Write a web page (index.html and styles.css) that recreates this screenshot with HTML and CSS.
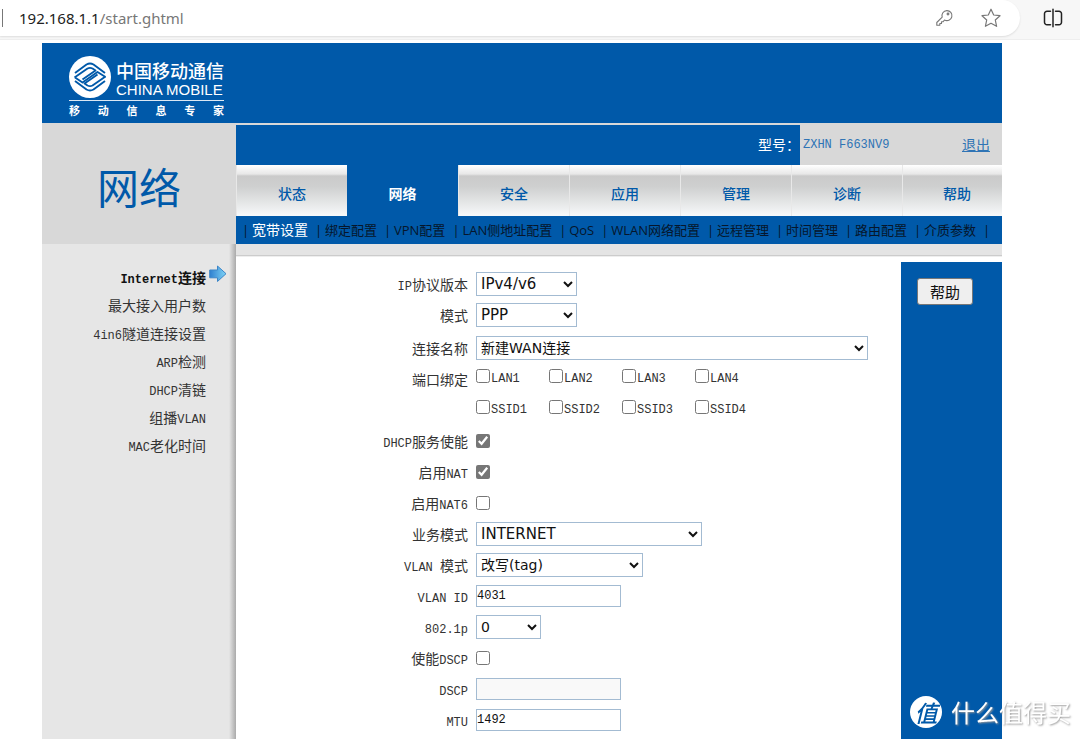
FILE: index.html
```html
<!DOCTYPE html>
<html lang="zh-CN">
<head>
<meta charset="utf-8">
<title>ZXHN F663NV9</title>
<link rel="stylesheet" href="styles.css">
</head>
<body>
<div class="browser-bar">
  <div class="address">
    <span class="divider"></span>
    <p class="url"><b>192.168.1.1</b>/start.ghtml</p>
    <button class="icon-button" aria-label="密码"><svg width="18" height="18" viewBox="0 0 18 18" fill="none" stroke="#777" stroke-width="1.1" stroke-linejoin="round"><path d="M7.2 8.2 1.8 13.500V16.200H4.800V14.500H6.500V12.800H8L9.500 11A5 5 0 1 0 7.200 8.200Z"/><circle cx="13" cy="5" r="0.900"/></svg></button>
    <button class="icon-button star" aria-label="收藏"><svg width="20" height="20" viewBox="0 0 20 20" fill="none" stroke="#777" stroke-width="1.200" stroke-linejoin="round"><path d="M10 1.200 12.700 7 19 7.700 14.300 12 15.600 18.300 10 15.300 4.400 18.300 5.700 12 1 7.700 7.300 7Z"/></svg></button>
  </div>
  <button class="icon-button split" aria-label="分屏"><svg width="20" height="20" viewBox="0 0 20 20" fill="none" stroke="#222" stroke-width="1.500" stroke-linecap="round"><path d="M10 1.200V18.800M7.500 3.200H4A2.500 2.500 0 0 0 1.500 5.700V14.300A2.500 2.500 0 0 0 4 16.800H7.500M12.500 3.200H16A2.500 2.500 0 0 1 18.500 5.700V14.300A2.500 2.500 0 0 1 16 16.800H12.500"/></svg></button>
</div>

<div class="page">
  <header class="banner">
    <div class="logo">
      <div class="logo-top">
        <svg width="42" height="42" viewBox="0 0 42 42"><circle cx="21" cy="21" r="21" fill="#fff"/><g fill="none" stroke="#0059a9" stroke-width="1.900" stroke-linejoin="round"><path d="M6 17 17.500 8.500Q21 6.500 24.500 8.500L36 17"/><path d="M5.500 21.500 18.500 12.500Q21 11.200 23.500 12.500L26.500 14.500 13.500 23.500"/><path d="M36.500 20.500 23.500 29.500Q21 30.800 18.500 29.500L15.500 27.500 28.500 18.500"/><path d="M6 21.500 13.500 26.500 28.500 16 36.500 21"/><path d="M6 25 17.500 33.500Q21 35.500 24.500 33.500L36 25"/></g></svg>
        <div class="logo-name"><strong>中国移动通信</strong><span>CHINA MOBILE</span></div>
      </div>
      <p class="slogan"><span>移</span><span>动</span><span>信</span><span>息</span><span>专</span><span>家</span></p>
    </div>
  </header>

  <div class="masthead">
    <h1 class="section-title">网络</h1>
    <div class="masthead-main">
      <div class="device">
        <span class="device-label">型号：</span>
        <div class="device-info"><span class="mono">ZXHN F663NV9</span><a href="#">退出</a></div>
      </div>
      <nav class="tabs">
        <a href="#">状态</a><a href="#" class="active">网络</a><a href="#">安全</a><a href="#">应用</a><a href="#">管理</a><a href="#">诊断</a><a href="#">帮助</a>
      </nav>
      <nav class="submenu">
        <i>|</i><a href="#" class="active">宽带设置</a><i>|</i><a href="#">绑定配置</a><i>|</i><a href="#">VPN配置</a><i>|</i><a href="#">LAN侧地址配置</a><i>|</i><a href="#">QoS</a><i>|</i><a href="#">WLAN网络配置</a><i>|</i><a href="#">远程管理</a><i>|</i><a href="#">时间管理</a><i>|</i><a href="#">路由配置</a><i>|</i><a href="#">介质参数</a><i>|</i>
      </nav>
    </div>
  </div>

  <div class="body">
    <nav class="sidebar">
      <a href="#" class="active"><span class="mono">Internet</span>连接<svg class="arrow" width="18" height="18" viewBox="0 0 18 18"><defs><linearGradient id="arrow-fill"><stop offset="0" stop-color="#2f80d0"/><stop offset="1" stop-color="#7fd4f5"/></linearGradient></defs><path d="M.7 5H8.500V1L17 8.700 8.500 16.500V12.800H.7Z" fill="url(#arrow-fill)" stroke="#3c86c8" stroke-linejoin="round"/></svg></a>
      <a href="#">最大接入用户数</a>
      <a href="#"><span class="mono">4in6</span>隧道连接设置</a>
      <a href="#"><span class="mono">ARP</span>检测</a>
      <a href="#"><span class="mono">DHCP</span>清链</a>
      <a href="#">组播<span class="mono">VLAN</span></a>
      <a href="#"><span class="mono">MAC</span>老化时间</a>
    </nav>
    <div class="content">
      <form class="form">
        <div class="row"><label for="ip"><span class="mono">IP</span>协议版本</label><select id="ip" class="w-small"><option>IPv4/v6</option></select></div>
        <div class="row"><label for="mode">模式</label><select id="mode" class="w-small"><option>PPP</option></select></div>
        <div class="row spaced"><label for="conn">连接名称</label><select id="conn" class="w-full cjk"><option>新建WAN连接</option></select></div>
        <div class="row"><span class="caption">端口绑定</span><div class="ports">
          <label><input type="checkbox"><span class="mono">LAN1</span></label><label><input type="checkbox"><span class="mono">LAN2</span></label><label><input type="checkbox"><span class="mono">LAN3</span></label><label><input type="checkbox"><span class="mono">LAN4</span></label></div></div>
        <div class="row"><span class="caption"></span><div class="ports">
          <label><input type="checkbox"><span class="mono">SSID1</span></label><label><input type="checkbox"><span class="mono">SSID2</span></label><label><input type="checkbox"><span class="mono">SSID3</span></label><label><input type="checkbox"><span class="mono">SSID4</span></label></div></div>
        <div class="row"><label for="dhcp"><span class="mono">DHCP</span>服务使能</label><input type="checkbox" id="dhcp" checked></div>
        <div class="row"><label for="nat">启用<span class="mono">NAT</span></label><input type="checkbox" id="nat" checked></div>
        <div class="row"><label for="nat6">启用<span class="mono">NAT6</span></label><input type="checkbox" id="nat6"></div>
        <div class="row"><label for="service">业务模式</label><select id="service" class="w-large"><option>INTERNET</option></select></div>
        <div class="row"><label for="vlan"><span class="mono">VLAN </span>模式</label><select id="vlan" class="w-medium cjk"><option>改写(tag)</option></select></div>
        <div class="row"><label for="vid"><span class="mono">VLAN ID</span></label><input type="text" id="vid" value="4031"></div>
        <div class="row"><label for="prio"><span class="mono">802.1p</span></label><select id="prio" class="w-tiny cjk"><option>0</option></select></div>
        <div class="row"><label for="dscp-on">使能<span class="mono">DSCP</span></label><input type="checkbox" id="dscp-on"></div>
        <div class="row"><label for="dscp"><span class="mono">DSCP</span></label><input type="text" id="dscp" disabled></div>
        <div class="row"><label for="mtu"><span class="mono">MTU</span></label><input type="text" id="mtu" value="1492"></div>
      </form>
      <aside class="help"><button class="help-button">帮助</button></aside>
    </div>
  </div>
</div>

<div class="watermark"><span class="badge">值</span><span>什么值得买</span></div>
</body>
</html>
```

FILE: styles.css
```css
* { box-sizing: border-box; }

body {
  margin: 0;
  height: 100vh;
  overflow: hidden;
  display: flex;
  flex-direction: column;
  background: #fff;
  color: #333;
  font: 14px/20px "Noto Sans CJK SC", sans-serif;
}

h1, p { margin: 0; }
a { color: inherit; text-decoration: none; }
.mono { font-family: "Liberation Mono", monospace; font-size: 12px; line-height: 12px; white-space: pre; }

/* Browser bar */
.browser-bar {
  flex: none;
  display: flex;
  align-items: flex-start;
  height: 40px;
  background: #f7f7f7;
  border-bottom: 1px solid #eee;
}
.address {
  flex: 1;
  display: flex;
  align-items: center;
  height: 36px;
  padding-right: 19px;
  background: #fff;
  border-radius: 0 18px 18px 0;
  box-shadow: 0 1px 2px #ddd;
}
.divider { width: 1px; height: 18px; margin: 0 16px 0 2px; background: #777; }
.url { flex: 1; color: #777; font: 15px/20px "Noto Sans", sans-serif; }
.url b { color: #222; font-weight: 400; }
.icon-button { display: flex; padding: 0; border: 0; background: none; }
.star { margin-left: 28px; }
.split { margin: 8px 17px 0 23px; }

/* Page frame */
.page {
  flex: 1;
  min-height: 0;
  display: flex;
  flex-direction: column;
  padding: 3px 78px 0 42px;
}
.banner { flex: none; height: 80px; padding: 13px 27px 0; background: #0059a9; color: #fff; }
.logo { width: 155px; }
.logo-top { display: flex; gap: 5px; padding-bottom: 2px; border-bottom: 1px solid #dce8f4; }
.logo-name { display: flex; flex-direction: column; gap: 2px; padding-top: 4px; white-space: nowrap; }
.logo-name strong { font-size: 18px; line-height: 20px; font-weight: 500; }
.logo-name span { font: 15px/15px "Liberation Sans", sans-serif; }
.slogan { display: flex; justify-content: space-between; font-size: 11px; line-height: 18px; font-weight: 700; }

.masthead { flex: none; display: flex; padding-top: 2px; background: #d8d8d8; }
.section-title {
  flex: none;
  width: 194px;
  padding-top: 5px;
  color: #0059a9;
  font-size: 42px;
  line-height: 112px;
  font-weight: 400;
  text-align: center;
}
.masthead-main { flex: 1; min-width: 0; }
.device { display: flex; height: 40px; line-height: 38px; background: #0059a9; }
.device-label { flex: 1; color: #fff; text-align: right; }
.device-info {
  display: flex;
  justify-content: space-between;
  width: 202px;
  padding: 0 12px 0 3px;
  background: #d8d8d8;
  color: #2f74b5;
}
.device-info .mono { line-height: 40px; }
.device-info a { text-decoration: underline; }

.tabs { display: grid; grid-template-columns: repeat(6, 111fr) 100fr; height: 51px; background: #0059a9; color: #0059a9; }
.tabs a {
  padding-top: 5px;
  border-left: 1px solid #e8e8e8;
  background: linear-gradient(#fff 0, #e8e8e8 9px, #cacaca 11px, #cfd0d0 22px, #f6f8f9 50px);
  font-weight: 500;
  line-height: 46px;
  text-align: center;
}
.tabs a:last-child { padding-left: 9px; }
.tabs .active { border: 0; background: #0059a9; color: #fff; font-weight: 700; }

.submenu {
  display: flex;
  gap: 7px;
  height: 28px;
  padding-left: 6px;
  background: #0059a9;
  color: #06162b;
  font: 13px/28px "Open Sans", "Noto Sans CJK SC", sans-serif;
  white-space: nowrap;
}
.submenu i { width: 3px; font-style: normal; }
.submenu .active { color: #fff; font-size: 14px; }

/* Body */
.body { flex: 1; min-height: 0; display: flex; background: #e6e6e6; }
.sidebar {
  flex: none;
  display: flex;
  flex-direction: column;
  width: 194px;
  padding: 19px 30px 0 0;
  background: linear-gradient(to left, #aaa 0, #e6e6e6 7px);
  line-height: 28px;
  text-align: right;
}
.sidebar a { position: relative; }
.sidebar .active { color: #111; font-weight: 700; }
.arrow { position: absolute; right: -21px; top: 2px; }
.content {
  flex: 1;
  display: flex;
  min-width: 0;
  border-top: 11px solid #e4e4e4;
  background: linear-gradient(#bbb, #fff 2px);
}
.form { flex: 1; padding: 13px 33px 0 0; }
.row { display: grid; grid-template-columns: 232px 1fr; column-gap: 8px; align-items: center; height: 31px; }
.row > label, .caption { text-align: right; }
.spaced { margin-top: 2px; }

select, input[type="text"] {
  margin: 0;
  border: 1px solid #a3bbd2;
  border-radius: 0;
  background: #fff;
  color: #111;
}
select { height: 24px; padding: 0; font: 15px/20px "DejaVu Sans", "Noto Sans CJK SC", sans-serif; }
select.cjk { font: 14px/20px "DejaVu Sans", "Noto Sans CJK SC", sans-serif; }
input[type="text"] { width: 145px; height: 22px; padding: 0; font: 12px/20px "Liberation Mono", monospace; }
input[type="text"]:disabled { background: #f9f9f9; }
input[type="checkbox"] { width: 14px; height: 14px; margin: 0; accent-color: #767676; }
.w-tiny { width: 65px; }
.w-small { width: 101px; }
.w-medium { width: 167px; }
.w-large { width: 226px; }
.w-full { width: 100%; }
.ports { display: grid; grid-template-columns: repeat(4, 73px); }
.ports label { display: flex; align-items: flex-start; gap: 1px; }
.ports .mono { line-height: 20px; }

.help { width: 101px; margin-top: 7px; padding: 16px; background: #0059a9; }
.help-button {
  width: 56px;
  height: 27px;
  padding: 0;
  border: 1px solid #777;
  border-radius: 3px;
  background: #efefef;
  color: #111;
  font: 15px/20px "Noto Sans CJK SC", sans-serif;
}

.watermark {
  position: fixed;
  right: 9px;
  bottom: 11px;
  display: flex;
  align-items: center;
  gap: 9px;
  color: #fff;
  font-size: 24px;
  line-height: 32px;
  text-shadow: 1px 1px 2px #999;
}
.badge {
  width: 32px;
  height: 32px;
  border-radius: 50%;
  background: #fff;
  color: #0059a9;
  font-size: 23px;
  font-style: italic;
  font-weight: 500;
  text-align: center;
  text-shadow: none;
}
```
